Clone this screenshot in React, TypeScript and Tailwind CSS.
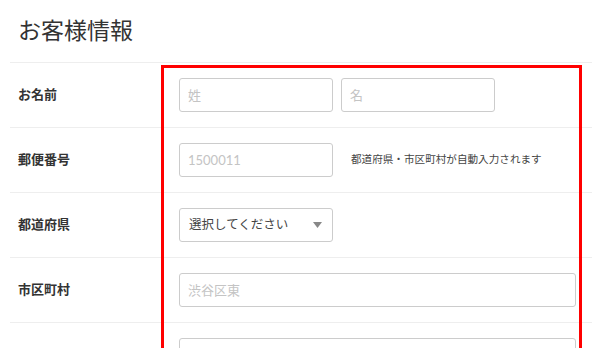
import React from "react";

const font = { fontFamily: "Lato, 'Noto Sans CJK JP', sans-serif" };

function Row({ label, children }: { label: string; children: React.ReactNode }) {
  return (
    <div className="flex h-[65px] items-center border-t border-[#eeeeee]">
      <div className="w-[169px] shrink-0 pl-[8px] text-[13px] font-bold text-[#333333]">{label}</div>
      <div className="flex flex-1 items-center">{children}</div>
    </div>
  );
}

function Input({ placeholder, className }: { placeholder: string; className: string }) {
  return (
    <input
      readOnly
      placeholder={placeholder}
      className={`h-[34px] rounded-[3px] border border-[#cccccc] bg-white px-[8px] text-[13px] text-[#333333] outline-none placeholder:text-[#c4c4c4] ${className}`}
      style={font}
    />
  );
}

export default function App() {
  return (
    <div className="relative h-[348px] w-[592px] overflow-hidden bg-white" style={font}>
      <div className="h-[62px] pl-[18px] pt-[15px] text-[23px] font-normal leading-[30px] text-[#333333]">
        お客様情報
      </div>
      <div className="ml-[10px]">
        <Row label="お名前">
          <div className="flex gap-[8px]">
            <Input placeholder="姓" className="w-[154px]" />
            <Input placeholder="名" className="w-[154px]" />
          </div>
        </Row>
        <Row label="郵便番号">
          <Input placeholder="1500011" className="w-[154px]" />
          <span className="ml-[18px] text-[10.6px] text-[#444444]">都道府県・市区町村が自動入力されます</span>
        </Row>
        <Row label="都道府県">
          <div className="flex h-[34px] w-[154px] items-center justify-between rounded-[3px] border border-[#cccccc] bg-white pl-[9px] pr-[10px]">
            <span className="text-[12.5px] text-[#444444]">選択してください</span>
            <svg width="9" height="6" viewBox="0 0 9 6">
              <path d="M0 0 H9 L4.5 6 Z" fill="#888888" />
            </svg>
          </div>
        </Row>
        <Row label="市区町村">
          <Input placeholder="渋谷区東" className="w-[397px]" />
        </Row>
        <Row label="">
          <Input placeholder="" className="w-[397px]" />
        </Row>
      </div>
      <div className="pointer-events-none absolute left-[161px] top-[65px] h-[300px] w-[421px] border-[3px] border-[#ff0000]" />
    </div>
  );
}
